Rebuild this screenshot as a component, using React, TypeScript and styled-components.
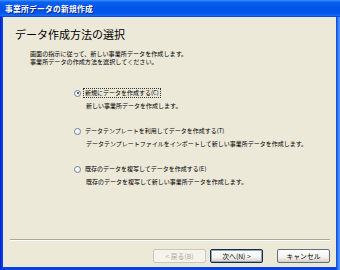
import styled, {createGlobalStyle} from "styled-components";

const GlobalStyle = createGlobalStyle`
    html, body {
        margin: 0;
        padding: 0;
        background: #ece9d8;
    }
    * {
        box-sizing: border-box;
    }
`;

const options = [
    {label: "新規にデータを作成する(C)", sub: "新しい事業所データを作成します。", checked: true},
    {label: "データテンプレートを利用してデータを作成する(T)", sub: "データテンプレートファイルをインポートして新しい事業所データを作成します。", checked: false},
    {label: "既存のデータを複写してデータを作成する(E)", sub: "既存のデータを複写して新しい事業所データを作成します。", checked: false},
];

const App = () => {
    return (
        <>
            <GlobalStyle/>
            <Window>
                <TitleBar>
                    <TitleText>事業所データの新規作成</TitleText>
                </TitleBar>
                <Body>
                    <Header>
                        <Heading>データ作成方法の選択</Heading>
                        <Description>
                            画面の指示に従って、新しい事業所データを作成します。<br/>
                            事業所データの作成方法を選択してください。
                        </Description>
                    </Header>
                    <OptionList>
                        {
                            options.map((opt, index) => {
                                return (
                                    <Option key={index}>
                                        <OptionRow>
                                            <Radio checked={opt.checked}/>
                                            <OptionLabel focused={opt.checked}>{opt.label}</OptionLabel>
                                        </OptionRow>
                                        <OptionSub>{opt.sub}</OptionSub>
                                    </Option>
                                )
                            })
                        }
                    </OptionList>
                    <Footer>
                        <Separator/>
                        <ButtonRow>
                            <Button disabled>&lt; 戻る(B)</Button>
                            <Button primary>次へ(N) &gt;</Button>
                            <Button gapLeft>キャンセル</Button>
                        </ButtonRow>
                    </Footer>
                </Body>
            </Window>
        </>
    )
}

const Window = styled.div`
    width: 340px;
    height: 270px;
    display: flex;
    flex-direction: column;
    background: linear-gradient(90deg, #0019cf 0px, #0842e0 2px, #0842e0 336px, #2f7cf5 338px, #5a9bff 340px);
    font-family: "Noto Sans CJK JP", "Noto Sans", sans-serif;
    color: #000;
`;

const TitleBar = styled.div`
    height: 17px;
    display: flex;
    align-items: center;
    padding-left: 5px;
    background: linear-gradient(180deg, #3d95ff 0%, #0a5ff0 12%, #0054e8 55%, #0058ee 80%, #1a6cf8 90%, #003dd7 100%);
`;

const TitleText = styled.span`
    font-size: 7.8px;
    font-weight: 700;
    color: #fff;
    text-shadow: 1px 1px 0 #0a1e80;
    letter-spacing: 0.2px;
`;

const Body = styled.div`
    flex: 1;
    margin: 0 4px 3px 3px;
    background: #ece9d8;
    display: flex;
    flex-direction: column;
`;

const Header = styled.div`
    padding: 11px 0 0 12px;
`;

const Heading = styled.h1`
    margin: 0;
    font-size: 11px;
    line-height: 13px;
    font-weight: 400;
`;

const Description = styled.p`
    margin: 9px 0 0 15px;
    font-size: 6.1px;
    line-height: 7.5px;
`;

const OptionList = styled.div`
    display: flex;
    flex-direction: column;
    gap: 15px;
    margin: 23px 0 0 71px;
`;

const Option = styled.div`
    display: flex;
    flex-direction: column;
`;

const OptionRow = styled.div`
    display: flex;
    align-items: center;
    height: 10px;
    gap: 3px;
`;

const Radio = styled.span<{ checked: boolean }>`
    position: relative;
    width: 7px;
    height: 7px;
    border-radius: 50%;
    border: 1px solid #6e86a0;
    background: radial-gradient(circle at 35% 35%, #ffffff 0%, #e6e6e0 100%);
    flex-shrink: 0;

    &::after {
        content: "";
        display: ${({checked}) => checked ? "block" : "none"};
        position: absolute;
        left: 1.5px;
        top: 1.5px;
        width: 2px;
        height: 2px;
        border-radius: 50%;
        background: #2a3a2a;
    }
`;

const OptionLabel = styled.span<{ focused: boolean }>`
    font-size: 6px;
    line-height: 8px;
    padding: 0 1px;
    outline: ${({focused}) => focused ? "1px dotted #333" : "none"};
`;

const OptionSub = styled.span`
    margin: 3px 0 0 12px;
    font-size: 6px;
    line-height: 10px;
`;

const Footer = styled.div`
    margin-top: auto;
    padding: 0 6px 4px 7px;
`;

const Separator = styled.div`
    height: 2px;
    border-top: 1px solid #aca899;
    border-bottom: 1px solid #ffffff;
`;

const ButtonRow = styled.div`
    display: flex;
    justify-content: flex-end;
    gap: 4px;
    margin-top: 8px;
`;

const Button = styled.button<{ primary?: boolean, gapLeft?: boolean }>`
    width: 53px;
    height: 14px;
    padding: 0;
    margin-left: ${({gapLeft}) => gapLeft ? "10px" : "0"};
    font-family: "Noto Sans CJK JP", "Noto Sans", sans-serif;
    font-size: 6.8px;
    line-height: 12px;
    color: #000;
    border-radius: 2px;
    border: 1px solid ${({primary}) => primary ? "#1a2a40" : "#5f6f80"};
    box-shadow: ${({primary}) => primary ? "inset 0 0 0 1px #8fa6c8" : "none"};
    background: linear-gradient(180deg, #ffffff 0%, #f4f3ee 60%, #d6d0c5 100%);

    &:disabled {
        color: #aca899;
        border-color: #c9c7ba;
        background: #f5f4ea;
    }
`;

export default App;
